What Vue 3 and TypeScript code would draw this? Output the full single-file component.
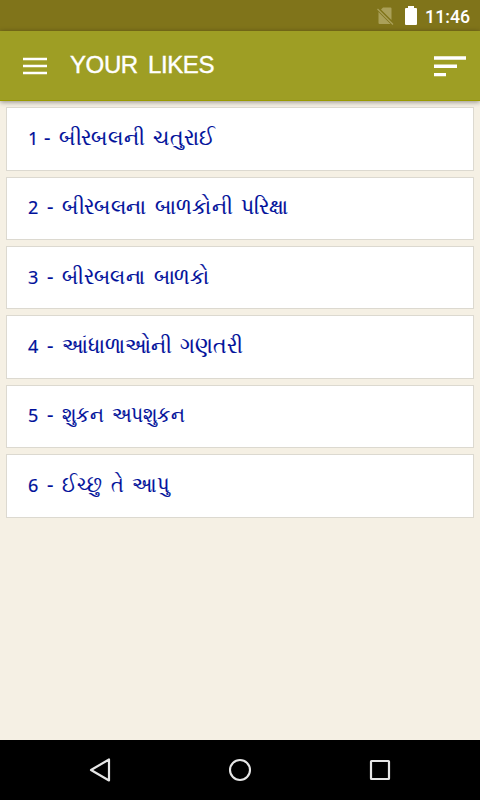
<script setup lang="ts">
interface Story {
  id: number
  title: string
}

const stories: Story[] = [
  { id: 1, title: 'બીરબલની ચતુરાઈ' },
  { id: 2, title: 'બીરબલના બાળકોની પરિક્ષા' },
  { id: 3, title: 'બીરબલના બાળકો' },
  { id: 4, title: 'આંધાળાઓની ગણતરી' },
  { id: 5, title: 'શુકન અપશુકન' },
  { id: 6, title: 'ઈચ્છુ તે આપુ' },
]
</script>

<template>
  <div class="screen">
    <div class="status">
      <svg class="sim" width="17" height="18" viewBox="0 0 17 18"><path d="M6 .5h7.500q1 0 1 1V13L4 2.500zM1.500 5L13.500 17H2.500q-1 0-1-1z" fill="#aaa059" /><path d="M.5 2l15.500 15.500" stroke="#aaa059" stroke-width="1.300" /></svg>
      <svg class="battery" width="12" height="19" viewBox="0 0 12 19"><path d="M3 0h6v2h2q1 0 1 1v15q0 1-1 1H1q-1 0-1-1V3q0-1 1-1h2z" fill="#fff" /></svg>
      <span class="clock">11:46</span>
    </div>
    <header class="bar">
      <svg width="24" height="18" viewBox="0 0 24 18"><path d="M0 2h24M0 9h24M0 16h24" stroke="#fff" stroke-width="2.600" /></svg>
      <h1>YOUR LIKES</h1>
      <svg class="sort" width="32" height="22" viewBox="0 0 32 22"><path d="M0 3h32M0 11.300h23M0 19.600h12" stroke="#fff" stroke-width="3.400" /></svg>
    </header>
    <main class="list">
      <div v-for="story in stories" :key="story.id" class="card">
        <span class="number">{{ story.id }}</span>
        <span class="dash">-</span>
        <span class="title">{{ story.title }}</span>
      </div>
    </main>
    <nav class="nav">
      <svg width="24" height="26" viewBox="0 0 24 26"><path d="M21 2.500v21L3 13z" fill="none" stroke="#e6e6e6" stroke-width="2.200" stroke-linejoin="round" /></svg>
      <svg width="24" height="24" viewBox="0 0 24 24"><circle cx="12" cy="12" r="10" fill="none" stroke="#e6e6e6" stroke-width="2.100" /></svg>
      <svg width="24" height="24" viewBox="0 0 24 24"><rect x="3" y="3" width="18" height="18" rx=".5" fill="none" stroke="#e6e6e6" stroke-width="2.200" /></svg>
    </nav>
  </div>
</template>

<style>
body { background: #f5f0e4; }
</style>
<style scoped>
.screen { width: 480px; height: 800px; display: flex; flex-direction: column; background: #f5f0e4; overflow: hidden; }
.status { height: 31px; flex: none; background: #80741a; display: flex; align-items: center; justify-content: flex-end; padding-right: 10px; box-sizing: border-box; }
.sim { margin-right: 0; }
.battery { margin: 0 8px 0 11px; }
.clock { font: 500 17.700px/20px Roboto, sans-serif; color: #fff; padding-top: 2px; }
.bar { height: 70px; flex: none; background: #9e9e24; border-bottom: 1px solid #999900; display: flex; align-items: center; padding: 0 14px 0 23px; box-sizing: border-box; box-shadow: 0 1px 5px rgba(0, 0, 0, .42); position: relative; z-index: 1; }
h1 { margin: 0 0 2px 23px; font: 400 24px/28px "Liberation Sans", sans-serif; letter-spacing: -.4px; word-spacing: 4px; color: #fff; -webkit-text-stroke: .4px #fff; }
.sort { margin-left: auto; }
.list { flex: 1; padding: 6.200px 6px; display: flex; flex-direction: column; gap: 6px; }
.card { height: 63.400px; background: #fff; border: 1px solid #dcd9d0; box-sizing: border-box; display: flex; align-items: baseline; padding: 11.700px 0 0 21px; color: #00109a; font: 22px/32px "Noto Sans", sans-serif; white-space: nowrap; -webkit-text-stroke: .2px #00109a; }
.number { width: 19px; font-size: 18px; }
.dash { width: 15px; font-size: 20px; }
.title { word-spacing: 4px; transform: scaleX(.926); transform-origin: left; }
.card:nth-child(1) .number { width: 16px; }
.card:nth-child(2) .title { transform: scaleX(.921); }
.card:nth-child(3) .title { transform: scaleX(.909); }
.card:nth-child(5) .title { transform: scaleX(.846); }
.card:nth-child(6) .title { transform: scaleX(.873); }
.nav { height: 60px; background: #000; display: flex; align-items: center; justify-content: space-between; padding: 0 88px; }
</style>
